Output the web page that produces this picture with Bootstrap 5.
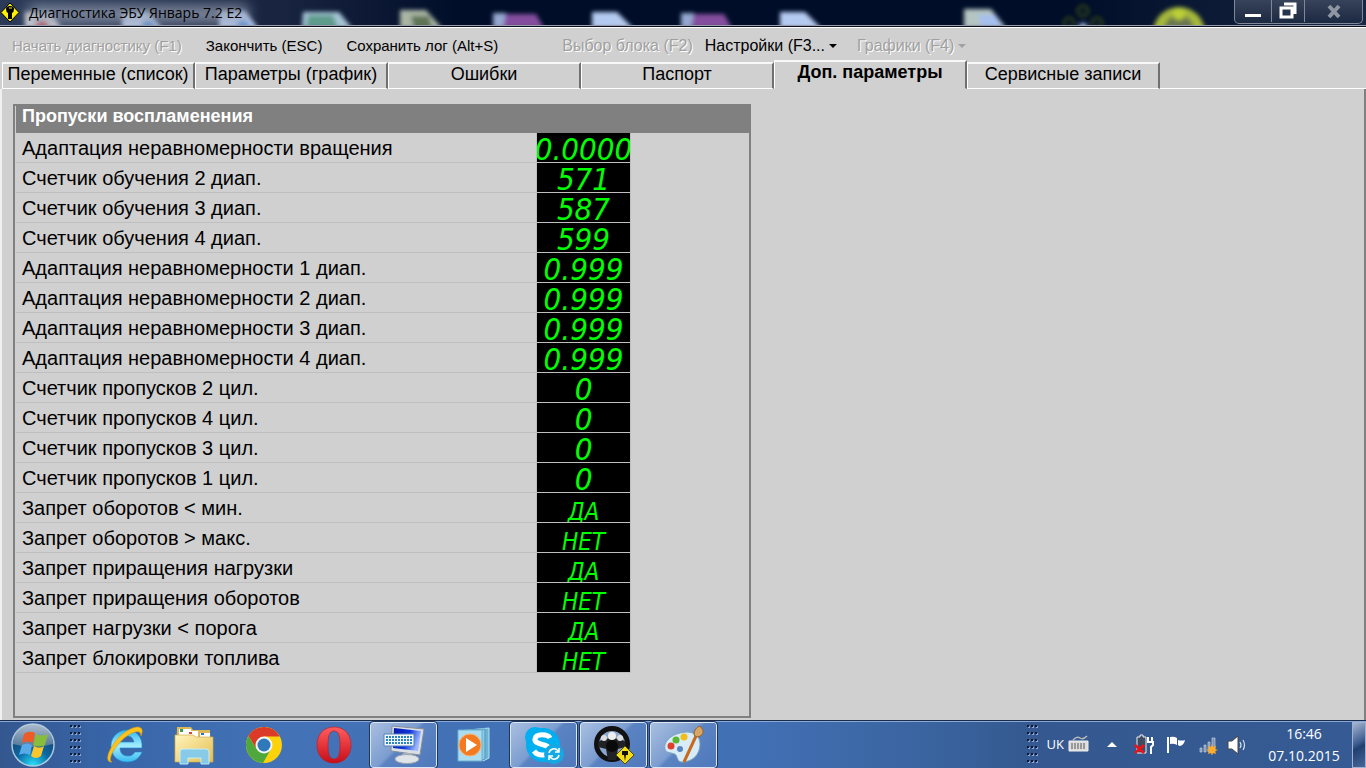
<!DOCTYPE html>
<html lang="ru">
<head>
<meta charset="utf-8">
<meta name="viewport" content="width=device-width, initial-scale=1">
<title>Диагностика ЭБУ Январь 7.2 E2</title>
<link rel="stylesheet" href="https://cdn.jsdelivr.net/npm/bootstrap@5.3.0/dist/css/bootstrap.min.css">
<style>
body{font-family:"Liberation Sans",Arial,sans-serif;background:#d0d0d0;color:#000;line-height:1.2}
button{color:inherit}
.titlebar{height:28px;background:linear-gradient(90deg,#2b3a58 0,#17233f 21%,#000d28 34%,#000d28 78%,#172743 100%);border-bottom:1px solid #fff;box-shadow:inset 0 -1px #0a1020,inset 0 -2px #9a9daa;overflow:hidden}
.title-scene{left:0;top:0;width:100%;height:25px}
.title-text{font-family:"Open Sans","Noto Sans",sans-serif;font-size:14px}
.win-ctl{width:129px;height:24px;border:1px solid #7f8899;border-top:0;border-radius:0 0 5px 5px;margin-right:3px;background:linear-gradient(#37435a,#1c2942)}
.win-ctl button{border:0;background:none;padding:0;height:22px}
.win-ctl button+button{border-left:1px solid #7f8899}
.w-min{width:36px}.w-max{width:33px}
.toolbar{height:32px;font-size:15px}
.toolbar button{background:none;border:0;padding:0;white-space:nowrap}
.toolbar .lg-item{font-size:16px}
.toolbar .select-block{margin-left:64px;margin-right:12px}
.toolbar .settings{margin-right:20px}
.toolbar button:disabled{color:#a0a0a0;text-shadow:1px 1px #fff}
.toolbar .dropdown-toggle::after{border-top:4px solid;border-left:4px solid transparent;border-right:4px solid transparent;margin-left:4px;vertical-align:3px}
.tabstrip{height:29px;padding-left:2px;border:0;flex-wrap:nowrap}
.tabstrip .tab{width:193px;height:27px;background:#d0d0d0;border:0;border-top:2px solid #f8f8f8;border-left:1px solid #fff;border-right:2px solid #707070;font-size:18px;padding:0 0 3px;white-space:nowrap;border-bottom:1px solid #fff}
.tabstrip .tab.active{height:29px;font-weight:bold;padding-bottom:6px;border-bottom-color:#d0d0d0}
.page{border-left:2px solid #f0f0f0;border-right:2px solid #808080;padding:15px 11px 2px;min-height:0}
.panel{width:738px;max-width:100%;border:2px solid #808080;padding-left:1px}
.panel h2{font-size:18px;font-weight:bold;background:#808080;color:#fff;height:27px;margin:0;padding:0 6px;line-height:21px}
.params{border-collapse:separate;border-spacing:0;width:615px;max-width:100%;font-size:20px;table-layout:fixed}
.params th,.params td{height:30px;padding:0;border-bottom:1px solid #bfbfbf;border-right:1px solid #bfbfbf;font-weight:normal}
.params th{padding:2px 0 0 6px;line-height:27px}
.params .c-value{width:94px}
.params td{background:#000;color:#0f0;text-align:center;background-clip:padding-box}
.lcd{display:flex;justify-content:center;height:29px;overflow:hidden;font-family:"DejaVu Sans Condensed","DejaVu Sans",sans-serif;font-stretch:condensed;font-style:italic;font-size:31px;line-height:33px;white-space:nowrap}
.lcd.word{font-size:24px;line-height:38px}
.taskbar{height:48px;border-top:1px solid #1a2c4c;box-shadow:inset 0 1px #8ba9d6;background:linear-gradient(90deg,#34578f 0,#3865a8 8%,#4372b6 20%,#4270b5 55%,#3a649f 68%,#34588f 76%,#365b94 100%)}
.taskbar button{border:0;background:none;padding:0}
.orb{width:66px}
.slots{gap:3px}
.slot{width:67px;height:47px}
.taskbar .slot.open{border:1px solid #dbe6f5;border-radius:3px;outline:1px solid #1f3559;background:linear-gradient(135deg,#a9bfe0 0,#7c9dd0 45%,#5b83c2 50%,#4f79bc 100%);height:46px;margin-top:1px}
.clock{font-family:"Open Sans","Noto Sans",sans-serif;color:#fff;font-size:14px;line-height:22px;text-align:center;width:80px}
.lang{font-family:"Open Sans","Noto Sans",sans-serif;color:#fff;font-size:13px}
.taskbar .peek{width:14px;height:46px;border:1px solid #9eb1d0;background:linear-gradient(150deg,#a5b5cf 0,#3d5d91 45%,#22406f 55%,#46679b)}
</style>
</head>
<body class="vh-100 d-flex flex-column overflow-hidden">
<header class="titlebar flex-shrink-0 position-relative d-flex justify-content-between align-items-start">
  <svg class="title-scene position-absolute" viewBox="0 0 1366 25" preserveAspectRatio="none" aria-hidden="true">
    <defs><filter id="soft" x="-20%" y="-50%" width="140%" height="200%"><feGaussianBlur stdDeviation="2"/></filter><filter id="glow" x="-20%" y="-80%" width="140%" height="260%"><feGaussianBlur stdDeviation="7"/></filter></defs>
    <g filter="url(#soft)">
      <path d="M25 12h25l12 16H25z" fill="#c8cad0"/><circle cx="42" cy="27" r="7" fill="#b84a5a"/>
      <path d="M122 12h26l14 16h-40z" fill="#bccdec"/><path d="M219 11h26l13 17h-39z" fill="#b5caf0"/><circle cx="148" cy="27" r="7" fill="#4d8bd0"/><circle cx="243" cy="27" r="7" fill="#5a94d8"/>
      <path d="M303 12h36l13 16h-50z" fill="#a5c5d5"/><path d="M308 15h25l5 13h-32z" fill="#5e9c8c"/>
      <path d="M400 10h26l16 18h-42z" fill="#aab5a4"/><path d="M411 16l18 0 3 12h-18z" fill="#5e7454"/>
      <path d="M494 14h42l8 14h-50z" fill="#844d9d"/><path d="M493 13h13l-3 15h-10z" fill="#95a7d0"/><path d="M592 12h25l16 16h-41z" fill="#b5caf0"/>
      <path d="M682 14h42l8 14h-50z" fill="#844d9d"/><path d="M681 13h13l-3 15h-10z" fill="#95a7d0"/><path d="M780 12h25l16 16h-41z" fill="#b5caf0"/>
      <path d="M964 9h27l15 19h-42z" fill="#b5c5c2"/><path d="M978 15l18 0 6 12h-20z" fill="#a5c0ef"/>
      <circle cx="1083" cy="11" r="5" fill="none" stroke="#2f3f1c" stroke-width="3"/><circle cx="1069" cy="23" r="5" fill="none" stroke="#2f3f1c" stroke-width="3"/><circle cx="1097" cy="23" r="5" fill="none" stroke="#2f3f1c" stroke-width="3"/><circle cx="1083" cy="27" r="4" fill="#a5c0ef"/>
      <circle cx="1179" cy="33" r="26" fill="#a5b83b"/><circle cx="1179" cy="30" r="15" fill="#6a7750"/><circle cx="1179" cy="14" r="6" fill="#bbd035"/>
    </g>
    <rect x="28" y="5" width="220" height="18" fill="#98a1b3" opacity=".8" filter="url(#glow)"/>
  </svg>
  <div class="d-flex align-items-center position-relative gap-2">
    <svg width="21" height="26" viewBox="0 0 21 26" aria-hidden="true"><path d="M10 3l9 9.500-9 9.500-9-9.500z" fill="#fff200" stroke="#000"/><path d="M6 9q0-3 4-3t4 3-2 4v6H8v-6q-2-1-2-4z" fill="#000"/><path d="M9 8h3" stroke="#fff200"/></svg>
    <span class="title-text">Диагностика ЭБУ Январь 7.2 E2</span>
  </div>
  <div class="win-ctl d-flex position-relative">
    <button class="w-min" aria-label="Свернуть"><svg class="d-block mx-auto" width="18" height="22"><path d="M1 14h16v3H1z" fill="#fff"/></svg></button>
    <button class="w-max" aria-label="Развернуть"><svg class="d-block mx-auto" width="18" height="22"><path d="M5 4h11v10M2 8h11v9H2z" fill="none" stroke="#fff" stroke-width="3"/><path d="M6 11h4v3H6z" fill="#273551"/></svg></button>
    <button class="flex-grow-1" aria-label="Закрыть"><svg class="d-block mx-auto" width="16" height="22"><path d="M3 6l10 11M13 6L3 17" stroke="#8e95a3" stroke-width="4"/></svg></button>
  </div>
</header>
<nav class="toolbar d-flex align-items-center flex-shrink-0 ps-2 pt-1">
  <button class="ms-1" disabled>Начать диагностику (F1)</button>
  <button class="ms-4">Закончить (ESC)</button>
  <button class="ms-4">Сохранить лог (Alt+S)</button>
  <button class="lg-item select-block" disabled>Выбор блока (F2)</button>
  <button class="lg-item settings dropdown-toggle">Настройки (F3...</button>
  <button class="lg-item dropdown-toggle" disabled>Графики (F4)</button>
</nav>
<div class="tabstrip nav nav-tabs align-items-end flex-shrink-0" role="tablist">
  <button class="tab" role="tab">Переменные (список)</button>
  <button class="tab" role="tab">Параметры (график)</button>
  <button class="tab" role="tab">Ошибки</button>
  <button class="tab" role="tab">Паспорт</button>
  <button class="tab active" role="tab" aria-selected="true">Доп. параметры</button>
  <button class="tab" role="tab">Сервисные записи</button>
  <span class="flex-grow-1 border-bottom border-white"></span>
</div>
<main class="page flex-grow-1 d-flex">
  <section class="panel">
    <h2>Пропуски воспламенения</h2>
    <table class="params">
      <colgroup><col><col class="c-value"></colgroup>
      <tbody>
        <tr><th scope="row">Адаптация неравномерности вращения</th><td><span class="lcd">0.0000</span></td></tr>
        <tr><th scope="row">Счетчик обучения 2 диап.</th><td><span class="lcd">571</span></td></tr>
        <tr><th scope="row">Счетчик обучения 3 диап.</th><td><span class="lcd">587</span></td></tr>
        <tr><th scope="row">Счетчик обучения 4 диап.</th><td><span class="lcd">599</span></td></tr>
        <tr><th scope="row">Адаптация неравномерности 1 диап.</th><td><span class="lcd">0.999</span></td></tr>
        <tr><th scope="row">Адаптация неравномерности 2 диап.</th><td><span class="lcd">0.999</span></td></tr>
        <tr><th scope="row">Адаптация неравномерности 3 диап.</th><td><span class="lcd">0.999</span></td></tr>
        <tr><th scope="row">Адаптация неравномерности 4 диап.</th><td><span class="lcd">0.999</span></td></tr>
        <tr><th scope="row">Счетчик пропусков 2 цил.</th><td><span class="lcd">0</span></td></tr>
        <tr><th scope="row">Счетчик пропусков 4 цил.</th><td><span class="lcd">0</span></td></tr>
        <tr><th scope="row">Счетчик пропусков 3 цил.</th><td><span class="lcd">0</span></td></tr>
        <tr><th scope="row">Счетчик пропусков 1 цил.</th><td><span class="lcd">0</span></td></tr>
        <tr><th scope="row">Запрет оборотов &lt; мин.</th><td><span class="lcd word">ДА</span></td></tr>
        <tr><th scope="row">Запрет оборотов &gt; макс.</th><td><span class="lcd word">НЕТ</span></td></tr>
        <tr><th scope="row">Запрет приращения нагрузки</th><td><span class="lcd word">ДА</span></td></tr>
        <tr><th scope="row">Запрет приращения оборотов</th><td><span class="lcd word">НЕТ</span></td></tr>
        <tr><th scope="row">Запрет нагрузки &lt; порога</th><td><span class="lcd word">ДА</span></td></tr>
        <tr><th scope="row">Запрет блокировки топлива</th><td><span class="lcd word">НЕТ</span></td></tr>
      </tbody>
    </table>
  </section>
</main>
<footer class="taskbar flex-shrink-0 d-flex justify-content-between align-items-center">
  <svg width="0" height="0" class="position-absolute" aria-hidden="true"><defs>
    <pattern id="dots" width="4" height="7" patternUnits="userSpaceOnUse"><path d="M0 0h2v2H0z" fill="#0d1b33"/><path d="M2 1h1v2H1V2h1z" fill="#8aa4cf"/></pattern>
    <radialGradient id="orbFill" cx=".5" cy="1" r=".9"><stop offset="0" stop-color="#2be6ff"/><stop offset=".45" stop-color="#0a6aa5"/><stop offset="1" stop-color="#1c3a63"/></radialGradient>
    <linearGradient id="orbGloss" x2="0" y2="1"><stop offset="0" stop-color="#c8d4e0"/><stop offset="1" stop-color="#5c7c9c"/></linearGradient>
    <linearGradient id="ieFill" x2="0" y2="1"><stop offset="0" stop-color="#2fb8ee"/><stop offset=".5" stop-color="#a4ecff"/><stop offset="1" stop-color="#38baf0"/></linearGradient>
    <linearGradient id="gold" x2="1" y2="1"><stop offset="0" stop-color="#fff5bd"/><stop offset="1" stop-color="#e5bd4f"/></linearGradient>
    <linearGradient id="screen" x2="1" y2=".3"><stop offset="0" stop-color="#0717a5"/><stop offset=".6" stop-color="#1237dd"/><stop offset="1" stop-color="#9cb7ff"/></linearGradient>
    <linearGradient id="redO" x2="0" y2="1"><stop offset="0" stop-color="#ff5d5f"/><stop offset="1" stop-color="#c80e18"/></linearGradient>
  </defs></svg>
  <div class="d-flex align-items-center">
    <button class="orb" aria-label="Пуск"><svg class="d-block mx-auto" width="46" height="46" viewBox="0 0 46 46"><circle cx="23" cy="23" r="21" fill="url(#orbFill)" stroke="#a9c9dd" stroke-width="1.500"/><path d="M3 22a20 20 0 0 1 40 0q-20 6-40 0z" fill="url(#orbGloss)" opacity=".85"/><path d="M14 12q5-4 11-1l-2 10q-5-3-11 0z" fill="#ee5b26"/><path d="M26 12q6 3 12 0l-3 11q-6 3-12 0z" fill="#88bd3c"/><path d="M12 23q5-3 10 0l-2 10q-6-3-11 0z" fill="#5aa9e9"/><path d="M24 24q5 3 10 0l-3 10q-5 4-10 0z" fill="#fbc62d"/></svg></button>
    <svg class="ms-1 me-2" width="12" height="40" aria-hidden="true"><rect width="11" height="38" fill="url(#dots)"/></svg>
    <div class="slots d-flex">
    <button class="slot" aria-label="Internet Explorer"><svg class="d-block mx-auto" width="40" height="40" viewBox="0 0 40 40"><path d="M31 27h7c-3 7-8 10-15 10C13 37 7 30 7 21S14 5 23 5s16 7 15 18H16c0 5 3 8 8 8 3 0 5-1 7-4zM16 17h14c-1-4-3-6-7-6s-6 2-7 6z" fill="url(#ieFill)" stroke="#1d8cd0" stroke-width=".6"/><path d="M8 37c-5 1-6-5-1-14C13 12 24 3 33 2c6 0 6 4 4 9 0-4-2-5-6-4C22 9 10 22 7 31c-1 4-1 5 1 6z" fill="#fcc31c" stroke="#d49a0a" stroke-width=".6"/></svg></button>
    <button class="slot" aria-label="Проводник"><svg class="d-block mx-auto" width="40" height="40" viewBox="0 0 40 40"><path d="M3 2h14l2 3h17l1 30H2z" fill="#dab85a"/><path d="M5 4h12v8H5z" fill="#fff"/><path d="M6 4h3v3H6z" fill="#3a9b48"/><path d="M14 6h10v6H14z" fill="#fff"/><path d="M15 7h3v2h-3z" fill="#d8472d"/><path d="M26 8h10v6H26z" fill="#fff"/><path d="M27 8h3v2h-3z" fill="#2c73c9"/><path d="M1 10h18l3 2h17v25H1z" fill="url(#gold)" stroke="#d2ac46" stroke-width=".7"/><path d="M6 27q0-3 3-3h23q3 0 3 3v12h-8v-6H14v6H6z" fill="#83cbee" stroke="#c4efff" opacity=".95"/></svg></button>
    <button class="slot" aria-label="Chrome"><svg class="d-block mx-auto" width="38" height="38" viewBox="0 0 38 38"><circle cx="19" cy="19" r="18" fill="#fdd20a"/><path d="M19 10.500h15.800A18 18 0 0 0 3.400 10L11 22z" fill="#dc3a28"/><path d="M3.400 10A18 18 0 0 0 18 37l8-14-7 4-8-5z" fill="#4fa83d"/><circle cx="19" cy="19" r="8.500" fill="#f5f5f5"/><circle cx="19" cy="19" r="6.500" fill="#2f79ba"/></svg></button>
    <button class="slot" aria-label="Opera"><svg class="d-block mx-auto" width="38" height="40" viewBox="0 0 38 40"><path fill-rule="evenodd" d="M19 2c11 0 17 8 17 18s-6 18-17 18S2 30 2 20 8 2 19 2zm0 4c-5 0-6 6-6 14s1 14 6 14 6-6 6-14-1-14-6-14z" fill="url(#redO)" stroke="#bd1820" stroke-width=".6"/></svg></button>
    <button class="slot open" aria-label="Экранная клавиатура"><svg class="d-block mx-auto" width="42" height="40" viewBox="0 0 42 40"><path d="M9 1l32 3-4 26-29-4z" fill="#d9dfe5" stroke="#858e98"/><path d="M11 3l27 3-3 20-25-3z" fill="url(#screen)"/><path d="M20 28h9l1 5h-11z" fill="#aab2bb"/><ellipse cx="24" cy="34" rx="12" ry="4.500" fill="#dfe4e8" stroke="#9ca5ae"/><path d="M1 9h30v12H1z" fill="#f0f6fb" stroke="#5784b5"/><path d="M3 12h26M3 15h26M3 18h26" stroke="#2b82c6" stroke-width="2" stroke-dasharray="2 1"/></svg></button>
    <button class="slot" aria-label="Windows Media"><svg class="d-block mx-auto" width="36" height="38" viewBox="0 0 36 38"><path d="M12 4l21-2v30l-6 3z" fill="#6db3d6" stroke="#b0e2f2"/><path d="M8 4l21-1v30l-5 2z" fill="#8ac8e3" stroke="#5498be"/><path d="M2 4h24v31H2z" fill="#abdcf0" stroke="#6ab0d0"/><circle cx="14" cy="19" r="11" fill="#f37a20" stroke="#fbb36e"/><path d="M10 12l11 7-11 7z" fill="#fff"/></svg></button>
    <button class="slot open" aria-label="Skype"><svg class="d-block mx-auto" width="42" height="40" viewBox="0 0 42 40"><circle cx="12" cy="12" r="10" fill="#00aff0"/><circle cx="20" cy="20" r="17" fill="#00aff0"/><circle cx="28" cy="28" r="10" fill="#00aff0"/><path d="M27 13c-2-4-14-5-15 1-1 7 15 4 15 11 0 6-12 7-16 1" fill="none" stroke="#fff" stroke-width="5"/><circle cx="31" cy="29" r="10" fill="#15a9e4"/><path d="M26 28a5 5 0 0 1 9-2m1-3v4h-4M36 30a5 5 0 0 1-9 2m-1 3v-4h4" fill="none" stroke="#fff" stroke-width="1.500"/></svg></button>
    <button class="slot open" aria-label="Диагностика ЭБУ"><svg class="d-block mx-auto" width="42" height="40" viewBox="0 0 42 40"><circle cx="19" cy="19" r="15.500" fill="#8ba6cf" stroke="#111" stroke-width="5"/><path d="M5 17c8-5 20-5 28 0l-1 5-7 2-2 11h-8l-2-11-8-2z" fill="#202226"/><circle cx="11" cy="13" r="3" fill="#ddd"/><circle cx="19" cy="11" r="4" fill="#eee"/><circle cx="27" cy="13" r="3" fill="#ddd"/><circle cx="19" cy="21" r="6" fill="#0a0a0a"/><path d="M32 21l9 9-9 9-9-9z" fill="#f5dc17" stroke="#554d08"/><path d="M29 26h6v4h-2l-1 6-1-6h-2z" fill="#111"/></svg></button>
    <button class="slot open" aria-label="Paint"><svg class="d-block mx-auto" width="42" height="40" viewBox="0 0 42 40"><path d="M17 8c11-3 20 1 20 11 0 11-8 18-18 18-4 0-4-3-6-7-3-3-10-1-11-6C0 17 8 10 17 8z" fill="#d8ecf7" stroke="#7da4bf"/><circle cx="8" cy="21" r="3.500" fill="#e23e2d"/><circle cx="13" cy="15" r="3.500" fill="#5cb532"/><circle cx="21" cy="12" r="3.500" fill="#f2bd18"/><circle cx="17" cy="24" r="3" fill="#5a84c0"/><path d="M33 11L21 37" stroke="#c76a20" stroke-width="3"/><path d="M31 10q0-7 6-9l3 4q1 6-6 7z" fill="#d8a663" stroke="#98622a"/></svg></button>
    </div>
  </div>
  <div class="d-flex align-items-center">
    <svg class="me-2" width="12" height="40" aria-hidden="true"><rect width="11" height="38" fill="url(#dots)"/></svg>
    <span class="lang me-1">UK</span>
    <svg width="22" height="20" class="me-3" aria-label="Клавиатура"><path d="M5 5q4-4 7-2t7-2" fill="none" stroke="#bbb" stroke-width="1.500"/><path d="M1 6h19v10H1z" fill="#ddd" stroke="#eee"/><path d="M3 9h15M3 11h15M3 13h15" stroke="#555" stroke-dasharray="2 1"/></svg>
    <svg width="12" height="8" class="me-3" aria-label="Показать значки"><path d="M1 6l5-5 5 5z" fill="#fff"/></svg>
    <svg width="20" height="22" class="me-2" aria-label="Батарея"><path d="M3 3h3V1h3v2h3v16H3z" fill="#3f4d64" stroke="#eee"/><path d="M14 3v4m4-4v4m-5 1h6v3l-2 2v7" fill="none" stroke="#fff" stroke-width="2"/><path d="M1 11l9 8m0-8l-9 8" stroke="#f01018" stroke-width="2.500"/></svg>
    <svg width="20" height="20" class="ms-1 me-2" aria-label="Центр поддержки"><path d="M2 2v16" stroke="#fff" stroke-width="2"/><path d="M4 2q4-1 7 1v7q-3-2-7-1zM12 5q4 1 7 0-1 5-5 6-1 0-2-1z" fill="#fff"/></svg>
    <svg width="20" height="20" class="ms-1 me-2" aria-label="Сеть"><path d="M2 13h2v4H2zm4-3h2v7H6zm4-3h2v10h-2zm4-4h3v14h-3z" fill="#7f92b0" stroke="#d0dbea" stroke-width=".6"/><path d="M14 9l1 3 3-1-1 3 3 1-3 1 1 3-3-1-1 3-1-3-3 1 1-3-3-1 3-1-1-3 3 1z" fill="#ffac28"/></svg>
    <svg width="22" height="20" aria-label="Громкость"><path d="M2 6h4l6-5v18l-6-5H2z" fill="#fff" stroke="#444"/><path d="M14 7q2 3 0 6m3-8q3 5 0 10" fill="none" stroke="#d5e2f4" stroke-width="1.200"/></svg>
    <div class="clock ms-3 me-2"><div>16:46</div><div>07.10.2015</div></div>
    <button class="peek" aria-label="Показать рабочий стол"></button>
  </div>
</footer>
<script src="https://cdn.jsdelivr.net/npm/bootstrap@5.3.0/dist/js/bootstrap.bundle.min.js"></script>
</body>
</html>
